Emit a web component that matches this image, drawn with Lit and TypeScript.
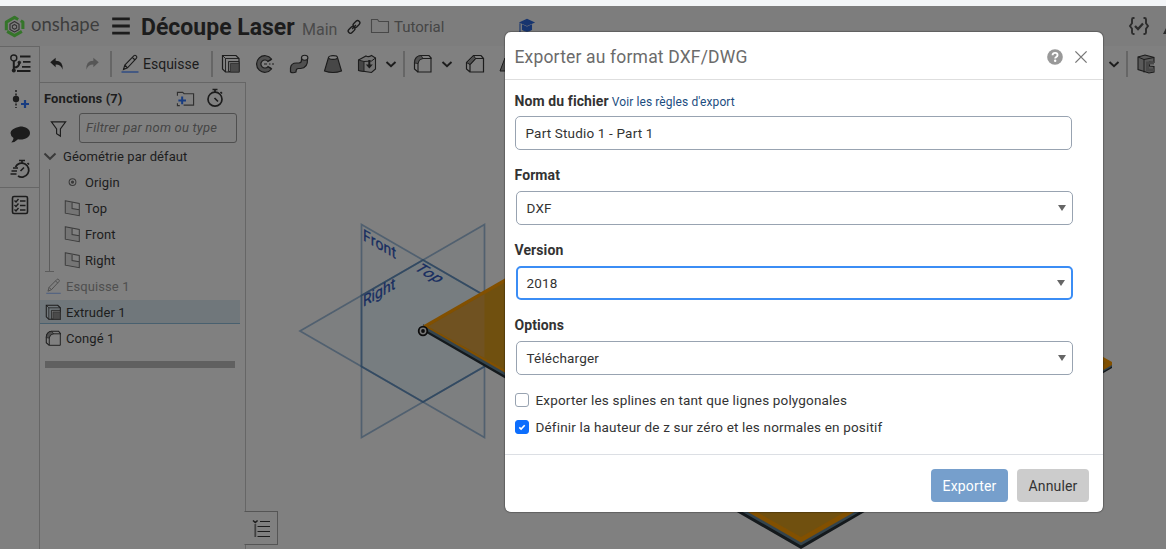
import { LitElement, html, css, svg } from "lit";
import { customElement, property } from "lit/decorators.js";

const D = "#1c1c1c";

const cube = svg`<path d="M1.5 1.5H15l3 3v13.500H4.500l-3-3z" fill="none" stroke="${D}" stroke-width="1.200"/><path d="M4.500 18V4.500H18M1.500 1.500l3 3" fill="none" stroke="${D}" stroke-width=".9"/><path d="M7.500 17.500V7.500H18v10z" fill="#6c6c6c" stroke="${D}" stroke-width=".9"/><path d="M9.500 9.500H18V18H9.500z" fill="#4a4a4a" stroke="#303030" stroke-width=".8"/>`;
const fillet = svg`<path d="M8.500 4.500h9.500v13.500H5v-9Q5.500 5 8.500 4.500z" fill="none" stroke="${D}" stroke-width="1.100"/><path d="M5 18l-3.500-3V8Q2 2 8 1.500h8l2.500 3" fill="none" stroke="${D}" stroke-width="1.200"/><path d="M1.500 9Q2 2 8 1.500l2 3Q5.500 5 5 9.500z" fill="#505050" stroke="${D}" stroke-width=".8"/>`;
const pencil = svg`<path d="M3.500 15.500l1.300-4.500L14 1.700q1-.9 2.200.2 1.200 1.200.3 2.200L7.500 13.800zM4.800 11l2.700 2.800M12.500 3.500l2.500 2.500" fill="none" stroke="${D}" stroke-width="1.100"/><path d="M1.500 18h17" stroke="#1b3f83" stroke-width="1.200"/>`;
const chev = svg`<path d="M5.500 8l4.500 4.300L14.500 8" fill="none" stroke="${D}" stroke-width="1.900"/>`;
const plane = svg`<path d="M1.500 1L9.500 2.500V10l8.500 1.500v7L1.500 15.500z" fill="#757575"/><path d="M1.500 1L18 4v14.500L1.500 15.500zM9.500 2.500V10l8.500 1.500" fill="none" stroke="#3c3c3c" stroke-width="1.200"/>`;

const ICONS: Record<string, unknown> = {
  logo: svg`<g fill="none" stroke-linejoin="round"><path d="M2.200 13.500V5.800L10 1.300l3.500 2M16 4.500l2 1.300v6.500M17 14.600L10 18.700l-7-4" stroke="#35752a" stroke-width="2.900"/><path d="M10 5.300l4.300 2.500v5L10 15.200l-4.300-2.400v-5z" stroke="#333" stroke-width="1.100"/><path d="M10 8l2 1.200v2.300L10 12.600l-2-1.100V9.200z" stroke="#353535" stroke-width="1.100"/></g>`,
  burger: svg`<path d="M2 3.500h16M2 10h16M2 16.500h16" stroke="${D}" stroke-width="2.600"/>`,
  link: svg`<g fill="none" stroke="${D}" stroke-width="1.700"><rect x="8.400" y="3.600" width="9.500" height="5.600" rx="2.800" transform="rotate(-45 13 6.400)"/><rect x="2.200" y="10.800" width="9.500" height="5.600" rx="2.800" transform="rotate(-45 7 13.600)"/><path d="M7.700 12.500l4.700-4.900"/></g>`,
  folder: svg`<path d="M1.500 16.500v-13h6l1.500 2h9.500v11z" fill="none" stroke="#484848" stroke-width="1.100"/>`,
  grad: svg`<path d="M1 6l9-4 9 4-9 4z" fill="#17356f"/><path d="M5 9v5q5 3.500 10 0V9l-5 2.300zM2.200 7v11" fill="#17356f" stroke="#17356f" stroke-width="1.200"/>`,
  braces: svg`<path d="M5.500 2H4.500Q3 2 3 3.500v3.800L1 10l2 2.700v3.800Q3 18 4.500 18h1M14.500 2h1Q17 2 17 3.500v3.800L19 10l-2 2.700v3.800Q17 18 15.500 18h-1" fill="none" stroke="#2c2c2c" stroke-width="1.900"/><path d="M6 10l3 3 5-5.500" fill="none" stroke="#2c2c2c" stroke-width="2.300"/>`,
  flask: svg`<path d="M6 3v5L1 18h10z" fill="#2c2c2c"/>`,
  tree: svg`<g fill="none" stroke="${D}"><circle cx="3.800" cy="4" r="3" stroke-width="1.400"/><path d="M3.800 7v9.500M3.800 13.500q5.500 0 5.500-5" stroke-width="2"/><circle cx="9.300" cy="8.500" r="1.300" fill="${D}"/><path d="M10 2.500h10.500M13 7.800h7.500M12 12.800h8.500M7 17h13.500" stroke-width="1.800"/></g><circle cx="3.800" cy="16.500" r="2" fill="${D}"/>`,
  insert: svg`<path d="M6 1v18" stroke="${D}" stroke-width="1.500" stroke-dasharray="2 1.400"/><circle cx="6" cy="10" r="3.200" fill="${D}"/><path d="M15 11v8M11 15h8" stroke="#183c80" stroke-width="2.200"/>`,
  bubble: svg`<path d="M10.200 2.500C15.500 2.500 20 5 20 9s-4.500 6.500-9.500 6.500q-1.500 0-2.500-.2Q5 18.500 1.300 18.500q2.200-2 2.200-4.500Q.5 12 .5 9 .5 4.500 10.200 2.500z" fill="${D}"/>`,
  fast: svg`<g fill="none" stroke="${D}"><path d="M5.500 8a7 7 0 1 1 2.500 9" stroke-width="1.800"/><path d="M9 1.500h6M12 2v3M17.500 4l1.500 1.500M10.500 12l3.500-3.500M3 9h5M1.500 12H7M.5 15h6" stroke-width="1.600"/></g>`,
  check: svg`<g fill="none" stroke="${D}" stroke-width="1.400"><rect x="2.500" y="1.500" width="15" height="17" rx="1.500" stroke-width="1.600"/><path d="M4.500 5.500l1.500 1.500 2.500-3M4.500 10l1.500 1.500L8.500 8.500M4.500 14.500L6 16l2.500-3M10 6h5.500M10 10.500h5.500M10 15h5.500"/></g>`,
  undo: svg`<path d="M2.500 8L8.500 3v3.300q8.500 0 7.800 10.200Q14.500 10.500 8.500 10.500v3z" fill="${D}"/>`,
  redo: svg`<path d="M17.500 8L11.500 3v3.300Q3 6.300 3.700 16.500 5.500 10.500 11.500 10.500v3z" fill="#565656"/>`,
  pencil, cube, fillet, chev, plane,
  fold: svg`<path d="M4.500 7.500l5.500 5.300L15.500 7.500" fill="none" stroke="#3a3a3a" stroke-width="2"/>`,
  revolve: svg`<path d="M16.500 5A8.300 8.300 0 1 0 16.500 15L13 12.500a4 4 0 1 1 0-5z" fill="#505050" stroke="${D}" stroke-width="1.200"/><path d="M9 10h3M14 10h1.500M17 10h2M13.500 7l3-1.500M13.500 13l3 1.500" stroke="${D}" stroke-width="1.100"/>`,
  sweep: svg`<path d="M1.500 18V14q.5-5 6-5h2.500q2.500 0 2.500-3V4l6 1q.5 9-7 9.500H9.500Q7 14.500 7 18q-3 1.500-5.500 0z" fill="#505050" stroke="${D}" stroke-width="1.200"/><ellipse cx="15.700" cy="3.800" rx="3.200" ry="2.500" fill="#858585" stroke="${D}" stroke-width="1.100"/>`,
  loft: svg`<path d="M5.500 3.500L1.500 17q8.500 3 17 0L14.500 3.500z" fill="#474747" stroke="${D}" stroke-width="1.100"/><ellipse cx="10" cy="3.500" rx="4.500" ry="1.900" fill="#848484" stroke="${D}" stroke-width="1.100"/>`,
  thicken: svg`<path d="M1.500 6L9 2q2.500 1.500 5.500-.5L18.500 4v11l-4 3.500-13-2z" fill="#737373" stroke="${D}" stroke-width="1.100"/><path d="M1.500 6l5.500 1.500v10l-5.500-1z" fill="#454545" stroke="${D}" stroke-width=".9"/><path d="M7 7.500l7.500-.5 4-3" fill="none" stroke="${D}"/><path d="M12.300 6v7" stroke="${D}" stroke-width="2"/><path d="M8.800 10.500h7l-3.500 4z" fill="${D}"/>`,
  chamfer: svg`<path d="M10.500 4.500h8v13.500H5v-7.500zM5 18l-3.500-3V8.500L8.500 1.500h7.500l2.500 3" fill="none" stroke="${D}" stroke-width="1.200"/><path d="M1.500 8.500l7-7 2 3L5 10.500z" fill="#505050" stroke="${D}"/>`,
  wedge: svg`<path d="M6 4L1 17h8z" fill="#505050" stroke="${D}"/>`,
  channel: svg`<path d="M2 3l7-2 9 2.500v5l-4.500-.5v4l4.500.5V18l-5 1-11-3.500z" fill="#5a5a5a" stroke="${D}" stroke-width="1.100"/><path d="M2 3l6 2.500v13M8 5.500l10-2" stroke="${D}" stroke-width="1" fill="none"/><path d="M10 7.500h8v3h-5v4h5v3h-8z" fill="#484848"/>`,
  newfolder: svg`<path d="M1.500 7V3.500H7l1.500 1.500h10V17H8M1.500 15v2.500H4" fill="none" stroke="#303030" stroke-width="1.200"/><path d="M6.500 8v8M2.500 12h8" stroke="#183c80" stroke-width="2.100"/>`,
  timer: svg`<g fill="none" stroke="${D}" stroke-width="1.700"><circle cx="10" cy="11.200" r="7"/><path d="M7.500 1.500h5M10 1.500V5M15.500 4l1.500 1.500M9.500 10l3.500 3.500"/></g>`,
  funnel: svg`<path d="M2.500 3h15l-5.500 7.500V18l-4-2.500v-5z" fill="none" stroke="${D}" stroke-width="1.200"/>`,
  origin: svg`<circle cx="10" cy="9.500" r="4" fill="none" stroke="#3a3a3a" stroke-width="1.200"/><circle cx="10" cy="9.500" r="1.900" fill="#3a3a3a"/>`,
  list: svg`<path d="M2 2.500l2.300 2 2.300-2" fill="none" stroke="${D}" stroke-width="1.600"/><path d="M4.300 6v13" stroke="#404040" stroke-width="1.800"/><path d="M9 3.500h10M6.500 8.500H19M6.500 13.500H19M6.500 18.500H19" stroke="${D}" stroke-width="1.200"/>`,
  help: svg`<circle cx="10" cy="10" r="9.800" fill="#999"/><path d="M6.900 7.800Q7.200 4.900 10.200 4.900T13.200 7.700Q13.100 9 11.600 9.900 10.200 10.800 10.200 12" fill="none" stroke="#fff" stroke-width="2.300"/><circle cx="10.200" cy="14.700" r="1.500" fill="#fff"/>`,
  close: svg`<path d="M2 2l16 16M18 2L2 18" stroke="#777" stroke-width="1.900"/>`,
  tick: svg`<path d="M5.500 10.500l3 2.900 6-6.300" fill="none" stroke="#fff" stroke-width="2.700"/>`,
};

@customElement("ui-icon")
class UiIcon extends LitElement {
  @property() name = "";
  static styles = css`
    :host { display: block; flex: none; width: 20px; height: 20px; }
    svg { display: block; width: 100%; height: 100%; overflow: visible; }
  `;
  render() {
    return html`<svg viewBox="0 0 20 20">${ICONS[this.name]}</svg>`;
  }
}

@customElement("model-view")
class ModelView extends LitElement {
  static styles = css`
    :host { display: block; flex: 1; min-width: 0; }
    svg { display: block; width: 100%; height: 100%; }
    text { font-family: Roboto, sans-serif; font-size: 16px; fill: #172d60; stroke: #172d60; stroke-width: 0.3px; }
  `;
  render() {
    return html`<svg viewBox="246 82 920 467">
      <g fill="#6a7a82" fill-opacity=".15" stroke="#2b4762" stroke-opacity=".55" stroke-width="1.700">
        <path d="M361.500 224.500L484.500 295.500V437.500L361.500 366.500z" />
        <path d="M361.500 295.500L484.500 224.500V366.500L361.500 437.500z" />
        <path d="M300 331L423 260L546 331L423 402z" />
      </g>
      <path d="M361.500 295.500L423 260l61.500 35.500v71L423 402l-61.500-35.500z" fill="none" stroke="#263f5a" stroke-opacity=".4" stroke-width="1.500" />
      <text transform="matrix(.87 .5 0 1 363 240)" textLength="38">Front</text>
      <text transform="matrix(.87 .5 -.87 .5 413 269)" textLength="28">Top</text>
      <text transform="matrix(.87 -.5 0 1 363 307)" textLength="37">Right</text>
      <path d="M423 331L801 549L1112 368V362L801 540L423 326z" fill="#14191c" />
      <path d="M423 328.500L801 545.500L1112 366.500V362L801 540L423 324z" fill="#34444d" />
      <path d="M423 325.500L734 147L1112 362V365L801 542.500z" fill="#825000" />
      <path d="M428 326.500L734 151L1106 363L801 537z" fill="#70500f" />
      <path d="M428 326.500L484.500 294V358z" fill="#705221" />
      <circle cx="423" cy="331" r="4.300" fill="#777" stroke="#0c0c0c" stroke-width="1.800" />
      <circle cx="423" cy="331" r="1.900" fill="#0c0c0c" />
    </svg>`;
  }
}

@customElement("feature-panel")
class FeaturePanel extends LitElement {
  static styles = css`
    :host { display: block; flex: none; width: 205px; border-top: 1px solid #666; border-right: 1px solid #666; font-size: 13px; letter-spacing: 0.09px; color: #1d1d1d; }
    .head { display: flex; align-items: center; height: 30px; padding-left: 4px; box-sizing: border-box; }
    .head b { flex: 1; font-weight: 700; }
    .head .nf { width: 19px; height: 19px; margin-right: 10px; }
    .head .tm { margin-right: 20px; }
    .filter { display: flex; align-items: center; height: 29px; padding-left: 9px; }
    .filter ui-icon { width: 19px; height: 19px; margin-right: 11px; margin-top: 2px; }
    .box { width: 158px; height: 30px; box-sizing: border-box; border: 1px solid #4f4f4f; border-radius: 3px; padding-left: 6px; line-height: 28px; font-style: italic; letter-spacing: 0.2px; color: #454545; }
    .rows { display: flex; flex-direction: column; padding-top: 1px; }
    .row { display: flex; align-items: center; height: 26px; }
    .group .chv { margin: 0 3px 0 0; }
    .kids { margin-left: 9px; border-left: 1px solid #5c5c5c; height: 103px; position: relative; margin-bottom: 1px; }
    .kids::after { content: ""; position: absolute; left: -5px; bottom: 0; width: 9px; height: 1px; background: #5c5c5c; }
    .kids .row { padding-left: 14px; }
    .kids ui-icon { width: 17px; height: 17px; margin-right: 4px; }
    .top { padding-left: 5px; }
    .top ui-icon { width: 17px; height: 17px; margin-right: 4px; }
    .dim { color: #4f4f4f; }
    .dim ui-icon { opacity: 0.5; }
    .sel { height: 24px; margin: 1px 5px 1px 0; background: #70777b; box-shadow: inset 0 -1px #48606f; }
    .bar { height: 7px; margin: 10px 10px 0 5px; background: #606060; }
  `;
  render() {
    const kid = (i: string, t: string) => html`<div class="row"><ui-icon name=${i}></ui-icon>${t}</div>`;
    return html`
      <div class="head"><b>Fonctions (7)</b><ui-icon class="nf" name="newfolder"></ui-icon><ui-icon class="tm" name="timer"></ui-icon></div>
      <div class="filter"><ui-icon name="funnel"></ui-icon><div class="box">Filtrer par nom ou type</div></div>
      <div class="rows">
        <div class="row group"><ui-icon class="chv" name="fold"></ui-icon>Géométrie par défaut</div>
        <div class="kids">${kid("origin", "Origin")}${kid("plane", "Top")}${kid("plane", "Front")}${kid("plane", "Right")}</div>
        <div class="row top dim"><ui-icon name="pencil"></ui-icon>Esquisse 1</div>
        <div class="row top sel"><ui-icon name="cube"></ui-icon>Extruder 1</div>
        <div class="row top"><ui-icon name="fillet"></ui-icon>Congé 1</div>
        <div class="bar"></div>
      </div>`;
  }
}

@customElement("export-dialog")
class ExportDialog extends LitElement {
  static styles = css`
    :host { display: flex; flex-direction: column; box-sizing: border-box; background: #fff; border-radius: 6px; box-shadow: 0 0 1px 1px rgba(0, 0, 0, 0.25); color: #333; font-size: 13.5px; letter-spacing: 0.17px; }
    header { display: flex; align-items: center; height: 48px; padding: 2px 15px 0 9.5px; box-sizing: border-box; border-bottom: 1px solid #dedede; }
    .title { flex: 1; font-size: 17.5px; color: #6b6b6b; }
    .help { width: 16px; height: 16px; margin-right: 11px; }
    .close { width: 14px; height: 14px; }
    .body { height: 375px; padding: 0 30px 0 10px; box-sizing: border-box; border-bottom: 1px solid #dcdfe4; }
    .label { height: 36px; line-height: 43px; font-weight: 700; font-size: 14px; margin-left: -0.5px; margin-right: 0.5px; letter-spacing: 0.1px; }
    .label span { font-size: 12px; font-weight: 400; color: #1c4d80; letter-spacing: 0.09px; margin-left: -0.5px; }
    .field { display: flex; align-items: center; height: 34px; box-sizing: border-box; border: 1px solid #98a3b1; border-radius: 5px; padding: 0 6px 0 9.5px; }
    .field.text { margin-right: 1px; }
    .field.pick { margin-left: 1px; }
    .label.n { height: 41px; line-height: 50px; }
    .field.focus { border: 2px solid #3b8df5; padding: 0 6px 0 8.5px; }
    .val { flex: 1; }
    .arrow { border: 4.5px solid transparent; border-top: 6px solid #666; border-bottom: 0; }
    .chk { display: flex; align-items: center; height: 27px; }
    .chk.first { margin-top: 11px; }
    .sq { width: 14px; height: 14px; box-sizing: border-box; border: 1px solid #98a3b1; border-radius: 3px; margin-right: 6.5px; }
    .sq.on { background: #0d6efd; border-color: #0d6efd; }
    .sq ui-icon { width: 12px; height: 12px; }
    footer { display: flex; justify-content: flex-end; padding: 14px 14px 0 0; gap: 9px; }
    .btn { height: 33px; line-height: 34px; border-radius: 4px; text-align: center; width: 72px; background: #ccc; font-size: 14px; }
    .btn.go { width: 77px; background: #769fcc; color: #fff; }
  `;
  render() {
    const pick = (label: string, value: string, focus = false) => html`
      <div class="label n">${label}</div>
      <div class="field pick ${focus ? "focus" : ""}"><span class="val">${value}</span><i class="arrow"></i></div>`;
    return html`
      <header><span class="title">Exporter au format DXF/DWG</span><ui-icon class="help" name="help"></ui-icon><ui-icon class="close" name="close"></ui-icon></header>
      <div class="body">
        <div class="label">Nom du fichier <span>Voir les règles d'export</span></div>
        <div class="field text"><span class="val">Part Studio 1 - Part 1</span></div>
        ${pick("Format", "DXF")}${pick("Version", "2018", true)}${pick("Options", "Télécharger")}
        <div class="chk first"><div class="sq"></div><span>Exporter les splines en tant que lignes polygonales</span></div>
        <div class="chk"><div class="sq on"><ui-icon name="tick"></ui-icon></div><span>Définir la hauteur de z sur zéro et les normales en positif</span></div>
      </div>
      <footer><div class="btn go">Exporter</div><div class="btn">Annuler</div></footer>`;
  }
}

@customElement("app-root")
class AppRoot extends LitElement {
  static styles = css`
    :host { display: flex; flex-direction: column; position: relative; width: 1166px; height: 549px; overflow: hidden; background: #808080; font-family: Roboto, sans-serif; color: #1c1c1c; box-sizing: border-box; }
    .strip { flex: none; height: 6px; background: #f3f5f7; }
    .bar { flex: none; display: flex; align-items: center; height: 40px; background: #7d7d7d; padding-left: 4px; }
    .bar span { flex: none; white-space: nowrap; }
    .bar .logo { width: 21px; height: 21px; }
    .bar .brand { font-family: Lato, sans-serif; font-size: 18.5px; color: #3d3d3d; width: 69px; margin: -4px 10px 0 6px; }
    .bar .burger { width: 22px; height: 22px; }
    .doc { font-size: 23px; font-weight: 700; width: 153px; margin: 2px 8px 0 9px; }
    .ws { font-size: 16px; color: #4a4a4a; width: 36px; margin-top: 7px; }
    .link { width: 16px; height: 16px; margin: 1px 8px 0; }
    .fold { font-size: 15px; color: #454545; margin-left: 4px; width: 124px; margin-top: 1px; }
    .grad { width: 18px; height: 18px; margin-right: 593px; }
    .bar .flask { margin-left: 13px; }
    .work { display: flex; flex: 1; min-height: 0; }
    .rail { flex: none; width: 39px; border-right: 1px solid #666; border-top: 1px solid #666; display: flex; flex-direction: column; align-items: center; box-sizing: content-box; padding-top: 7px; }
    .rail ui-icon { margin-bottom: 15px; }
    .rule { width: 39px; height: 1px; background: #666; margin-bottom: 7px; margin-top: -7px; }
    .main { flex: 1; display: flex; flex-direction: column; min-width: 0; }
    .tools { flex: none; height: 36px; display: flex; align-items: center; padding-left: 8px; overflow: hidden; width: 1118px; }
    .tools ui-icon { margin-right: 14px; }
    .tools .u { width: 18px; height: 18px; margin-right: 17px; }
    .tools .r { width: 18px; height: 18px; margin-right: 9px; }
    .tools .c { margin-right: 2px; margin-left: -10px; }
    .tools .c.w { margin-right: 8px; }
    .sep { width: 1.5px; height: 26px; background: #666; flex: none; margin-right: 8.5px; }
    .tools .pen { margin-right: 3px; }
    .sk { font-size: 14px; width: 68px; flex: none; }
    .gap { width: 581px; flex: none; }
    .stage { flex: 1; display: flex; min-height: 0; }
    .tab { position: absolute; left: 244px; top: 511px; width: 32px; height: 32px; border: 1px solid #555; border-left-color: #808080; background: #808080; display: flex; align-items: center; justify-content: center; }
    export-dialog { position: absolute; left: 505px; top: 32px; width: 598px; height: 480px; }
  `;
  render() {
    return html`
      <div class="strip"></div>
      <div class="bar">
        <ui-icon class="logo" name="logo"></ui-icon><span class="brand">onshape</span>
        <ui-icon class="burger" name="burger"></ui-icon><span class="doc">Découpe Laser</span>
        <span class="ws">Main</span><ui-icon class="link" name="link"></ui-icon>
        <ui-icon name="folder"></ui-icon><span class="fold">Tutorial</span>
        <ui-icon class="grad" name="grad"></ui-icon><ui-icon name="braces"></ui-icon><ui-icon class="flask" name="flask"></ui-icon>
      </div>
      <div class="work">
        <div class="rail">
          <ui-icon name="tree"></ui-icon><ui-icon name="insert"></ui-icon><ui-icon name="bubble"></ui-icon><ui-icon name="fast"></ui-icon>
          <div class="rule"></div><ui-icon name="check"></ui-icon>
        </div>
        <div class="main">
          <div class="tools">
            <ui-icon class="u" name="undo"></ui-icon><ui-icon class="r" name="redo"></ui-icon><i class="sep"></i>
            <ui-icon class="pen" name="pencil"></ui-icon><span class="sk">Esquisse</span><i class="sep"></i>
            <ui-icon name="cube"></ui-icon><ui-icon name="revolve"></ui-icon><ui-icon name="sweep"></ui-icon><ui-icon name="loft"></ui-icon><ui-icon name="thicken"></ui-icon><ui-icon class="c" name="chev"></ui-icon><i class="sep"></i>
            <ui-icon name="fillet"></ui-icon><ui-icon class="c w" name="chev"></ui-icon><ui-icon name="chamfer"></ui-icon><ui-icon name="wedge"></ui-icon>
            <span class="gap"></span><ui-icon class="c" name="chev"></ui-icon><i class="sep"></i><ui-icon name="channel"></ui-icon>
          </div>
          <div class="stage"><feature-panel></feature-panel><model-view></model-view></div>
        </div>
      </div>
      <div class="tab"><ui-icon name="list"></ui-icon></div>
      <export-dialog></export-dialog>`;
  }
}
